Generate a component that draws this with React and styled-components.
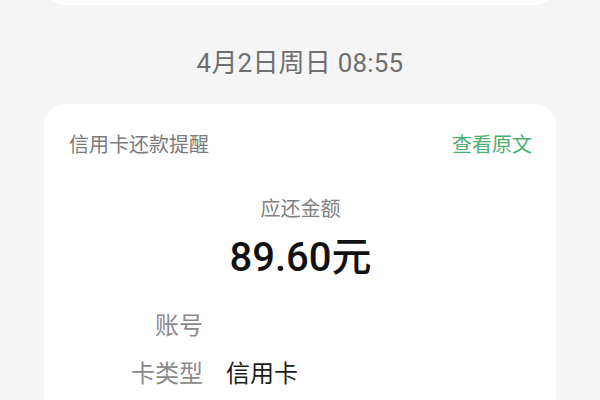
import React from "react";
import styled, { createGlobalStyle } from "styled-components";

const Global = createGlobalStyle`
  html, body { margin: 0; padding: 0; background: #f5f5f5; }
  body { font-family: Roboto, "Noto Sans CJK SC", sans-serif; }
`;

const Page = styled.div`
  width: 600px;
  height: 400px;
  overflow: hidden;
  background: #f5f5f5;
  display: flex;
  flex-direction: column;
  align-items: stretch;
  & > * { flex-shrink: 0; }
`;

const PrevCard = styled.div`
  margin: -40px 44px 0;
  height: 45px;
  background: #fff;
  border-radius: 22px;
`;

const DateLine = styled.div`
  margin-top: 44px;
  height: 28px;
  line-height: 28px;
  text-align: center;
  font-size: 26px;
  color: #6f6f6f;
  letter-spacing: 0.2px;
`;

const Card = styled.div`
  margin: 27px 44px 0;
  background: #fff;
  border-radius: 22px;
  padding: 28px 24px 30px 25px;
  display: flex;
  flex-direction: column;
`;

const Header = styled.div`
  display: flex;
  justify-content: space-between;
  align-items: center;
  height: 26px;
  font-size: 20px;
  line-height: 26px;
`;

const Title = styled.span`
  color: #7a7a7a;
`;

const Link = styled.span`
  color: #4cb070;
`;

const Caption = styled.div`
  margin-top: 37px;
  text-align: center;
  font-size: 20px;
  line-height: 28px;
  color: #808080;
`;

const Amount = styled.div`
  margin-top: 11px;
  text-align: center;
  font-size: 40px;
  line-height: 48px;
  font-weight: 500;
  color: #111;
`;

const Fields = styled.div`
  margin-top: 27px;
  display: grid;
  grid-template-columns: 134px 1fr;
  column-gap: 23px;
  row-gap: 14px;
`;

const Label = styled.div`
  text-align: right;
  font-size: 24px;
  line-height: 34px;
  height: 34px;
  color: #8a8a8a;
`;

const Value = styled.div`
  font-size: 24px;
  line-height: 34px;
  height: 34px;
  color: #1c1c1c;
`;

const fields = [
  ["账号", ""],
  ["卡类型", "信用卡"],
];

export default function App() {
  return (
    <>
      <Global />
      <Page>
        <PrevCard />
        <DateLine>4月2日周日 08:55</DateLine>
        <Card>
          <Header>
            <Title>信用卡还款提醒</Title>
            <Link>查看原文</Link>
          </Header>
          <Caption>应还金额</Caption>
          <Amount>89.60元</Amount>
          <Fields>
            {fields.map(([k, v]) => (
              <React.Fragment key={k}>
                <Label>{k}</Label>
                <Value>{v}</Value>
              </React.Fragment>
            ))}
          </Fields>
        </Card>
      </Page>
    </>
  );
}
